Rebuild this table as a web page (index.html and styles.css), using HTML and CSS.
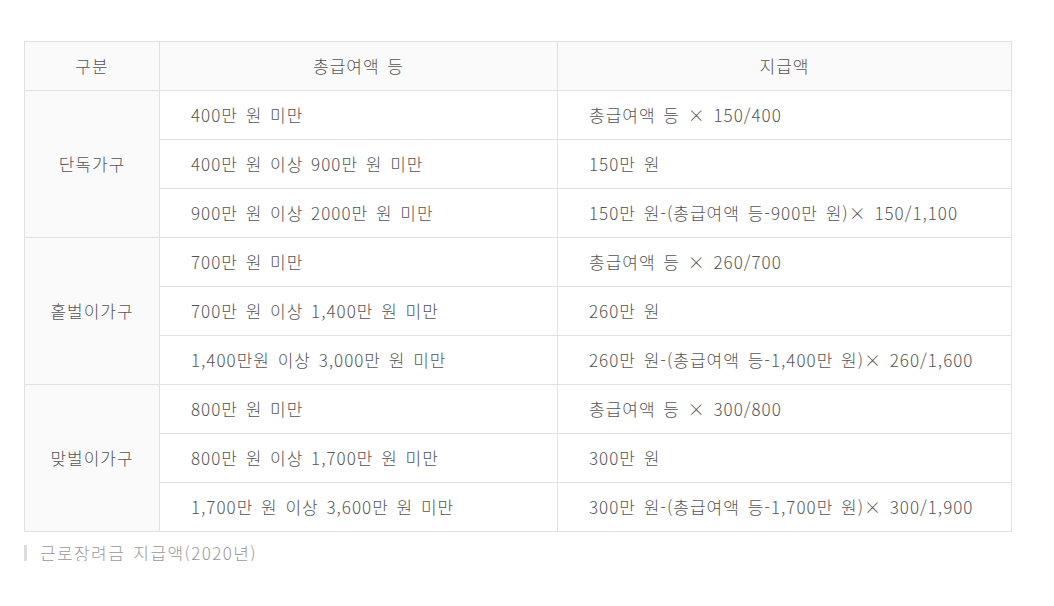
FILE: index.html
```html
<!DOCTYPE html>
<html lang="ko">
<head>
<meta charset="utf-8">
<link rel="stylesheet" href="styles.css">
</head>
<body>
<div class="wrap">
  <table class="tbl">
    <colgroup>
      <col class="c1"><col class="c2"><col class="c3">
    </colgroup>
    <thead>
      <tr><th>구분</th><th>총급여액 등</th><th>지급액</th></tr>
    </thead>
    <tbody>
      <tr><td class="grp" rowspan="3">단독가구</td><td>400만 원 미만</td><td>총급여액 등 × 150/400</td></tr>
      <tr><td>400만 원 이상 900만 원 미만</td><td>150만 원</td></tr>
      <tr><td>900만 원 이상 2000만 원 미만</td><td>150만 원-(총급여액 등-900만 원)× 150/1,100</td></tr>
      <tr><td class="grp" rowspan="3">홑벌이가구</td><td>700만 원 미만</td><td>총급여액 등 × 260/700</td></tr>
      <tr><td>700만 원 이상 1,400만 원 미만</td><td>260만 원</td></tr>
      <tr><td>1,400만원 이상 3,000만 원 미만</td><td>260만 원-(총급여액 등-1,400만 원)× 260/1,600</td></tr>
      <tr><td class="grp" rowspan="3">맞벌이가구</td><td>800만 원 미만</td><td>총급여액 등 × 300/800</td></tr>
      <tr><td>800만 원 이상 1,700만 원 미만</td><td>300만 원</td></tr>
      <tr><td>1,700만 원 이상 3,600만 원 미만</td><td>300만 원-(총급여액 등-1,700만 원)× 300/1,900</td></tr>
    </tbody>
  </table>
  <p class="caption">근로장려금 지급액(2020년)</p>
</div>
</body>
</html>
```
FILE: styles.css
```css
html, body {
  margin: 0;
  padding: 0;
  background: #fff;
}
body {
  font-family: "Noto Sans CJK KR", "Noto Sans", sans-serif;
  font-weight: 300;
  color: #555;
  font-size: 17px;
  letter-spacing: 1px;
  word-spacing: 2px;
}
.wrap {
  padding: 41px 43px 0 24px;
}
.tbl {
  width: 987px;
  border-collapse: collapse;
  table-layout: fixed;
}
.c1 { width: 135px; }
.c2 { width: 398px; }
.c3 { width: 454px; }
.tbl th, .tbl td {
  border: 1px solid #e1e1e1;
  height: 48px;
  padding: 0 0 0 31px;
  text-align: left;
  font-weight: 300;
  font-size: 17px;
  line-height: 20px;
  color: #555;
  white-space: nowrap;
}
.tbl th {
  background: #fafafa;
  text-align: center;
  padding: 0;
}
.tbl td.grp {
  background: #fafafa;
  text-align: center;
  padding: 0;
}
.caption {
  margin: 13px 0 0 0;
  padding-left: 13px;
  border-left: 3px solid #ddd;
  line-height: 16px;
  font-size: 17px;
  letter-spacing: 1.4px;
  color: #999;
}
```
